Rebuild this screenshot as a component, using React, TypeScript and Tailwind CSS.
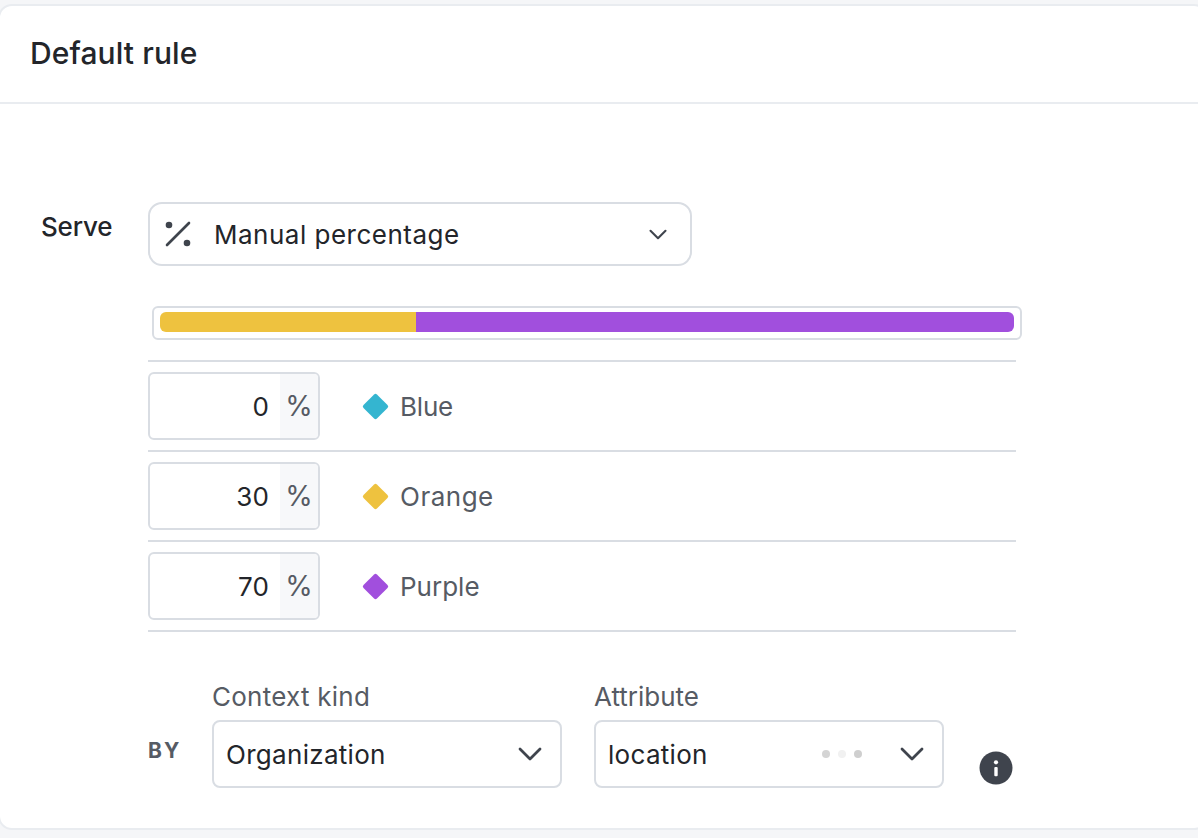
const font = "font-['Inter','Liberation_Sans',sans-serif]";

const variations = [
	{ value: "0", name: "Blue", color: "bg-[#34b5d0]", tracking: "tracking-[-0.2px]" },
	{ value: "30", name: "Orange", color: "bg-[#eec23f]", tracking: "tracking-[0.5px]" },
	{ value: "70", name: "Purple", color: "bg-[#a14fdd]", tracking: "tracking-[0px]" },
];

const Chevron = ({ width, height }: { width: number; height: number }) => (
	<svg width={width} height={height} viewBox="0 0 24 14" fill="none" className="shrink-0 text-[#3f444d]">
		<path d="M2 2 L12 12 L22 2" stroke="currentColor" strokeWidth="2.8" strokeLinecap="round" strokeLinejoin="round" />
	</svg>
);

const PercentIcon = () => (
	<svg width="28" height="28" viewBox="0 0 28 28" className="text-[#3f444d]">
		<circle cx="5" cy="5" r="3.3" fill="currentColor" />
		<circle cx="23" cy="23" r="3.3" fill="currentColor" />
		<path d="M3 25 L 25 3" stroke="currentColor" strokeWidth="2.6" strokeLinecap="round" />
	</svg>
);

const InfoIcon = () => (
	<svg width="34" height="34" viewBox="0 0 34 34">
		<circle cx="17" cy="17" r="16.5" fill="#3f444d" />
		<circle cx="17" cy="11.3" r="2.1" fill="#fff" />
		<rect x="15.3" y="16" width="3.4" height="9.2" rx="1" fill="#fff" />
	</svg>
);

const VariationRow = ({
	value,
	name,
	color,
	tracking,
}: {
	value: string;
	name: string;
	color: string;
	tracking: string;
}) => (
	<div className="flex items-center h-[90px] border-b-2 border-[#d9dde3]">
		<div className="flex w-[172px] h-[68px] border-2 border-[#d9dde3] rounded-[6px] overflow-hidden">
			<div className="flex-1 flex items-center justify-end pr-[11px] text-[26px] tracking-[0.2px] text-[#23252a]">{value}</div>
			<div className="w-[38px] flex items-center justify-center bg-[#f7f8fa] text-[28px] text-[#565b64]">%</div>
		</div>
		<div className={`ml-[46px] w-[19px] h-[19px] rotate-45 rounded-[2px] ${color}`} />
		<span className={`ml-[15px] text-[26px] text-[#565b64] ${tracking}`}>{name}</span>
	</div>
);

export default function App() {
	return (
		<div className={`h-[838px] w-[1198px] overflow-hidden bg-[#f5f6f8] pt-[4px] ${font}`}>
			<div className="w-[1210px] -ml-[2px] h-[826px] bg-white border-2 border-[#e9ecf0] rounded-[14px]">
				<div className="h-[98px] flex items-center pl-[30px] pb-[1px] border-b-2 border-[#e9ecf0] text-[30px] font-medium tracking-[0.1px] text-[#23252a]">
					Default rule
				</div>
				<div className="pt-[98px] pl-[41px] flex">
					<div className="w-[107px] pt-[7px] text-[26px] leading-[36px] font-medium tracking-[-0.2px] text-[#23252a]">Serve</div>
					<div className="w-[876px]">
						<div className="flex items-center w-[544px] h-[64px] pl-[14px] pr-[23px] border-2 border-[#d9dde3] rounded-[14px]">
							<PercentIcon />
							<span className="ml-[22px] flex-1 text-[26px] tracking-[0.5px] text-[#23252a]">Manual percentage</span>
							<Chevron width={18} height={11} />
						</div>
						<div className="ml-[4px] mt-[40px] w-[870px] h-[34px] p-[4px] px-[6px] border-2 border-[#d9dde3] rounded-[6px]">
							<div className="flex h-[20px] rounded-[6px] overflow-hidden">
								<div className="w-[30%] bg-[#eec23f]" />
								<div className="w-[70%] bg-[#a14fdd]" />
							</div>
						</div>
						<div className="w-[868px] mt-[20px] border-t-2 border-[#d9dde3]">
							{variations.map((v) => (
								<VariationRow key={v.name} {...v} />
							))}
						</div>
						<div className="flex items-start mt-[46px]">
							<div className="w-[64px] pt-[57px] text-[21px] font-bold tracking-[2px] text-[#565b64]">BY</div>
							<div className="w-[350px]">
								<div className="h-[36px] flex items-center text-[26px] tracking-[0.25px] text-[#565b64]">Context kind</div>
								<div className="mt-[6px] flex items-center justify-between h-[68px] pl-[12px] pr-[18px] border-2 border-[#d9dde3] rounded-[8px] text-[26px] tracking-[0.3px] text-[#23252a]">
									Organization
									<Chevron width={24} height={14} />
								</div>
							</div>
							<div className="w-[350px] ml-[32px]">
								<div className="h-[36px] flex items-center text-[26px] text-[#565b64]">Attribute</div>
								<div className="mt-[6px] flex items-center h-[68px] pl-[12px] pr-[18px] border-2 border-[#d9dde3] rounded-[8px] text-[26px] tracking-[0.3px] text-[#23252a]">
									<span className="flex-1">location</span>
									<div className="flex gap-[8px] mr-[38px]">
										<span className="w-[8px] h-[8px] rounded-full bg-[#d4d4d4]" />
										<span className="w-[8px] h-[8px] rounded-full bg-[#f1f1f1]" />
										<span className="w-[8px] h-[8px] rounded-full bg-[#cfcfcf]" />
									</div>
									<Chevron width={24} height={14} />
								</div>
							</div>
							<div className="ml-[35px] mt-[73px]">
								<InfoIcon />
							</div>
						</div>
					</div>
				</div>
			</div>
		</div>
	);
}
